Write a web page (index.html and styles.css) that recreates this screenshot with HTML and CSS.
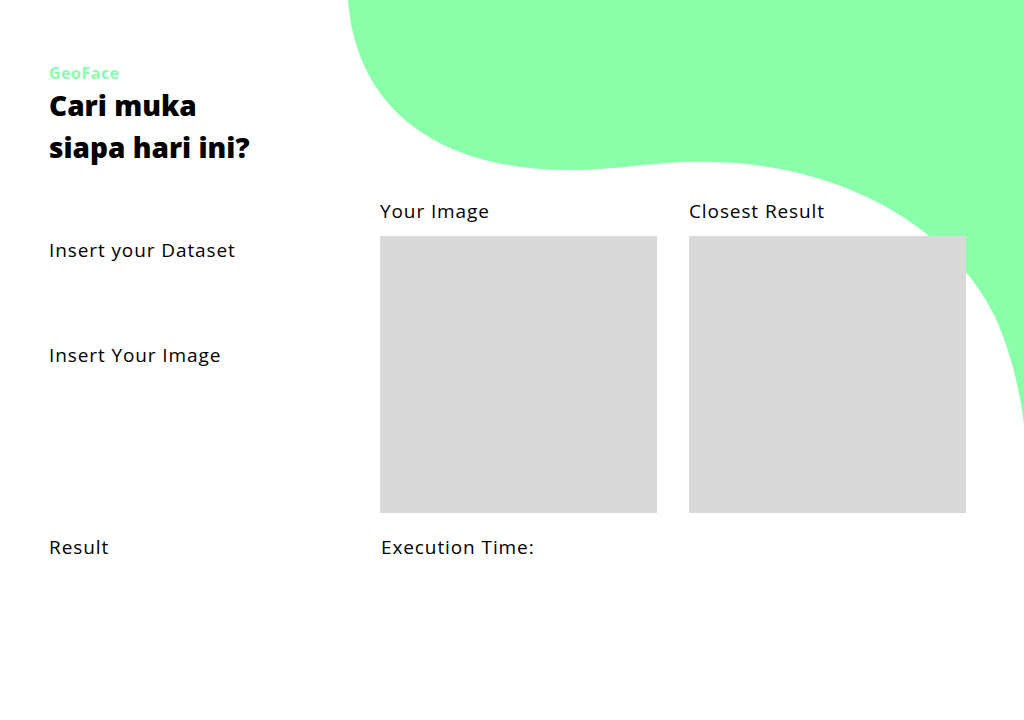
FILE: index.html
```html
<!DOCTYPE html>
<html lang="en">
<head>
    <meta charset="UTF-8">
    <meta name="viewport" content="width=device-width, initial-scale=1.0">
    <title>GeoFace</title>
    <link rel="stylesheet" href="styles.css">
</head>
<body>
    <svg class="blob" viewBox="0 0 1024 720" preserveAspectRatio="none" aria-hidden="true">
        <path d="M348 0 C356 110 440 172 576 170 C630 169 660 160 715 162 C840 165 950 225 995 317 C1010 350 1020 390 1024 425 L1024 0 Z" fill="#8AFFAA"/>
    </svg>

    <div class="page">
        <header class="header">
            <div class="brand">GeoFace</div>
            <h1 class="title">Cari muka<br>siapa hari ini?</h1>
        </header>

        <main class="main">
            <div class="inputs">
                <div class="field">Insert your Dataset</div>
                <div class="field">Insert Your Image</div>
            </div>

            <div class="images">
                <div class="image-item">
                    <div class="caption">Your Image</div>
                    <div class="image-box"></div>
                </div>
                <div class="image-item">
                    <div class="caption">Closest Result</div>
                    <div class="image-box"></div>
                </div>
            </div>

            <div class="result">Result</div>
            <div class="exec-time">Execution Time:</div>
        </main>
    </div>
</body>
</html>
```

FILE: styles.css
```css
body {
    margin: 0;
    background-color: #fff;
    font-family: "Open Sans", Arial, sans-serif;
    color: #000;
}

.blob {
    position: absolute;
    top: 0;
    left: 0;
    width: 1024px;
    height: 720px;
    z-index: 0;
}

.page {
    position: relative;
    z-index: 1;
    padding: 62px 0 0 49px;
}

.brand {
    font-size: 16px;
    font-weight: 700;
    line-height: 22px;
    letter-spacing: 0.5px;
    color: #8AFFAA;
}

.title {
    margin: 0;
    font-size: 28px;
    font-weight: 800;
    line-height: 42px;
}

.main {
    display: grid;
    grid-template-columns: 331px auto;
    margin-top: 30px;
}

.inputs {
    display: flex;
    flex-direction: column;
    gap: 78px;
    padding-top: 39px;
}

.field,
.caption,
.result,
.exec-time {
    font-size: 19px;
    line-height: 27px;
    letter-spacing: 0.9px;
}

.images {
    display: flex;
    gap: 32px;
}

.image-item {
    display: flex;
    flex-direction: column;
    gap: 11px;
}

.image-box {
    width: 277px;
    height: 277px;
    background: #D9D9D9;
}

.result,
.exec-time {
    margin-top: 21px;
}

.exec-time {
    padding-left: 1px;
}
```
